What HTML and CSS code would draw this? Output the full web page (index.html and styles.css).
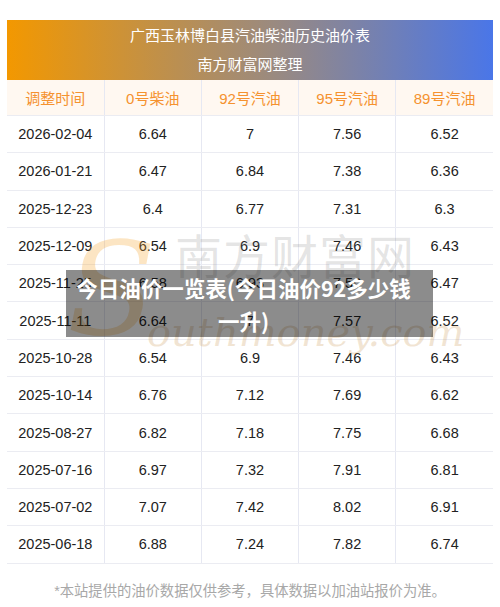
FILE: index.html
```html
<!DOCTYPE html>
<html lang="zh-CN">
<head>
    <meta charset="UTF-8">
    <meta name="viewport" content="width=device-width, initial-scale=1.0">
    <title>今日油价一览表</title>
    <link rel="stylesheet" href="styles.css">
</head>
<body>

<div class="page">
    <div class="price-box">
        <div class="banner">
            <div class="banner-title">广西玉林博白县汽油柴油历史油价表</div>
            <div class="banner-sub">南方财富网整理</div>
        </div>

        <table class="price-table">
            <thead>
                <tr>
                    <th>调整时间</th>
                    <th>0号柴油</th>
                    <th>92号汽油</th>
                    <th>95号汽油</th>
                    <th>89号汽油</th>
                </tr>
            </thead>
            <tbody>
                <tr><td>2026-02-04</td><td>6.64</td><td>7</td><td>7.56</td><td>6.52</td></tr>
                <tr><td>2026-01-21</td><td>6.47</td><td>6.84</td><td>7.38</td><td>6.36</td></tr>
                <tr><td>2025-12-23</td><td>6.4</td><td>6.77</td><td>7.31</td><td>6.3</td></tr>
                <tr><td>2025-12-09</td><td>6.54</td><td>6.9</td><td>7.46</td><td>6.43</td></tr>
                <tr><td>2025-11-25</td><td>6.58</td><td>6.93</td><td>7.50</td><td>6.47</td></tr>
                <tr><td>2025-11-11</td><td>6.64</td><td>7</td><td>7.57</td><td>6.52</td></tr>
                <tr><td>2025-10-28</td><td>6.54</td><td>6.9</td><td>7.46</td><td>6.43</td></tr>
                <tr><td>2025-10-14</td><td>6.76</td><td>7.12</td><td>7.69</td><td>6.62</td></tr>
                <tr><td>2025-08-27</td><td>6.82</td><td>7.18</td><td>7.75</td><td>6.68</td></tr>
                <tr><td>2025-07-16</td><td>6.97</td><td>7.32</td><td>7.91</td><td>6.81</td></tr>
                <tr><td>2025-07-02</td><td>7.07</td><td>7.42</td><td>8.02</td><td>6.91</td></tr>
                <tr><td>2025-06-18</td><td>6.88</td><td>7.24</td><td>7.82</td><td>6.74</td></tr>
            </tbody>
        </table>

        <!-- watermark -->
        <div class="watermark">
            <span class="wm-s">S</span>
            <span class="wm-cn">南方财富网</span>
            <span class="wm-en">outhmoney.com</span>
        </div>

        <div class="caption">今日油价一览表(今日油价92多少钱<br>一升)</div>
    </div>

    <p class="note">*本站提供的油价数据仅供参考，具体数据以加油站报价为准。</p>
</div>

</body>
</html>
```

FILE: styles.css
```css
body {
    margin: 0;
    padding: 0;
    background: #ffffff;
    font-family: "Liberation Sans", "Noto Sans CJK SC", sans-serif;
    color: #222;
}

.page {
    padding: 20px 7px 0;
}

.price-box {
    position: relative;
    width: 486px;
}

.banner {
    height: 60px;
    background: linear-gradient(to right, #f39800, #9a8a80 55%, #4a76e8);
    color: #fff;
    text-align: center;
    font-size: 15px;
}
.banner-title {
    line-height: 28px;
    padding-top: 2px;
}
.banner-sub {
    line-height: 30px;
}

.price-table {
    width: 486px;
    border-collapse: collapse;
    table-layout: fixed;
    font-size: 14.5px;
}
.price-table th, .price-table td {
    text-align: center;
    padding: 0;
    border-left: 1px solid #e6e8f2;
    border-bottom: 1px solid #ebecf2;
}
.price-table th:first-child, .price-table td:first-child {
    border-left: none;
}
.price-table th {
    height: 35px;
    background: #fff8f1;
    color: #f5922f;
    font-weight: normal;
    font-size: 15px;
}
.price-table td {
    height: 36.3px;
    color: #222;
}

.watermark {
    position: absolute;
    left: 60px;
    top: 208px;
    width: 380px;
    height: 135px;
    pointer-events: none;
}
.wm-s {
    position: absolute;
    left: 0;
    top: -4px;
    font-family: "DejaVu Serif", serif;
    font-style: italic;
    font-size: 130px;
    line-height: 1;
    color: rgba(245, 160, 40, 0.28);
}
.wm-cn {
    position: absolute;
    left: 108px;
    top: 2px;
    font-family: "Noto Sans CJK SC", sans-serif;
    font-size: 47px;
    letter-spacing: 1px;
    line-height: 1;
    color: rgba(120, 120, 120, 0.2);
}
.wm-en {
    position: absolute;
    left: 80px;
    top: 84px;
    font-family: "DejaVu Serif", serif;
    font-style: italic;
    font-size: 40px;
    line-height: 1;
    color: rgba(200, 150, 80, 0.25);
}

.caption {
    position: absolute;
    left: 59px;
    top: 250px;
    width: 367px;
    height: 67px;
    box-sizing: border-box;
    padding: 1px 12px 0 0;
    background: rgba(0, 0, 0, 0.45);
    color: #fff;
    font-family: "Noto Sans CJK SC", sans-serif;
    font-weight: bold;
    font-size: 21.5px;
    line-height: 33px;
    text-align: center;
}

.note {
    margin: 15px 0 0;
    text-align: center;
    color: #a8a8a8;
    font-size: 14.3px;
}
```
